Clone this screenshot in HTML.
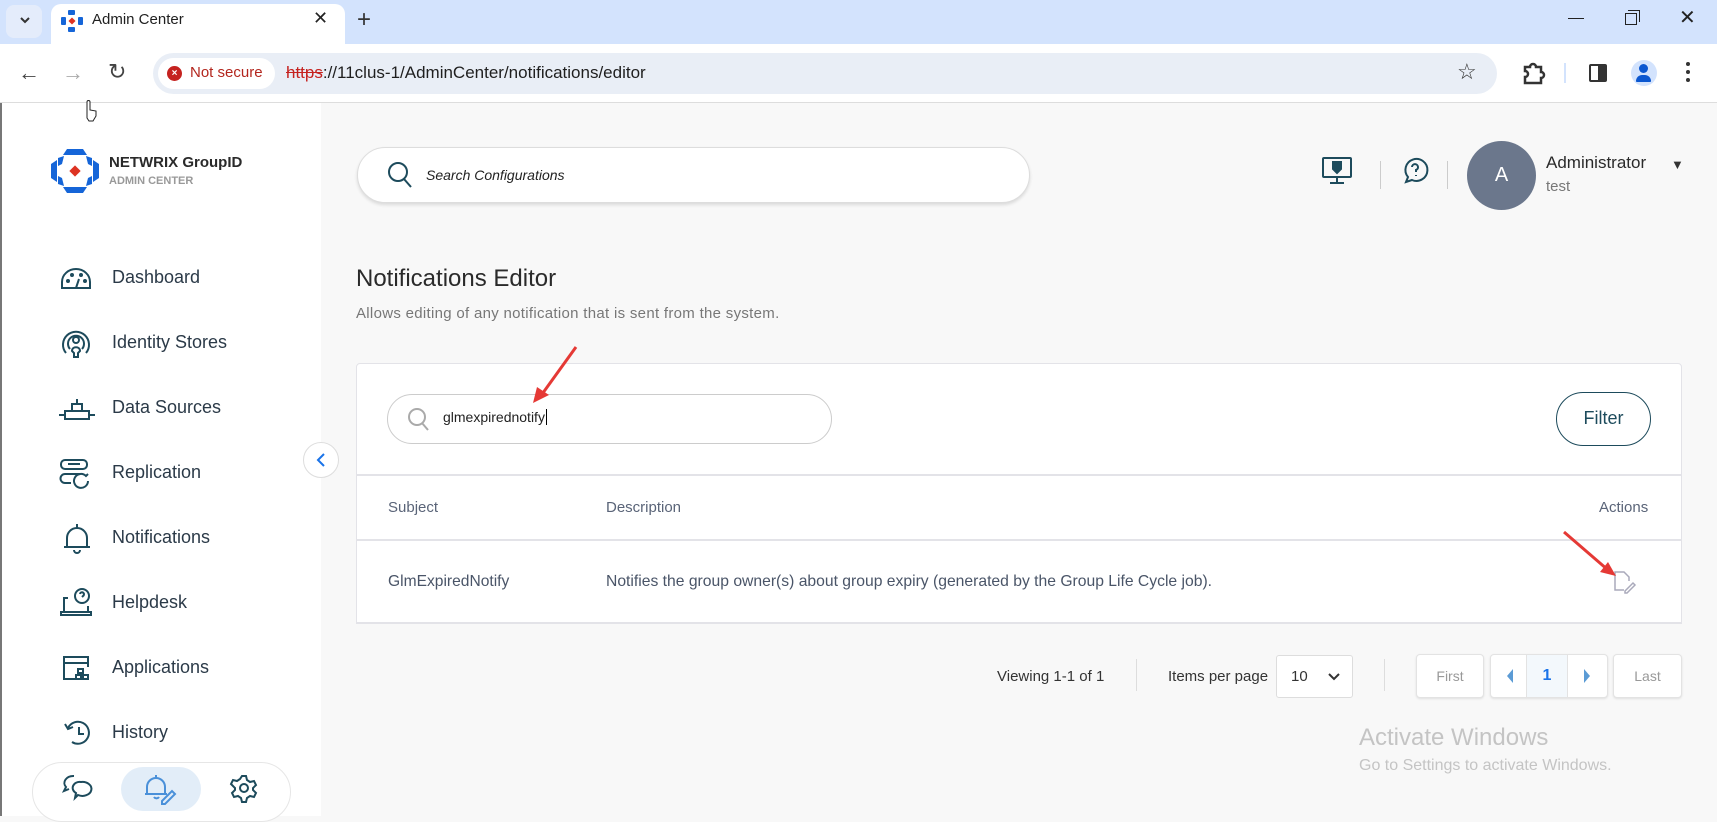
<!DOCTYPE html>
<html><head><meta charset="utf-8"><style>
*{box-sizing:border-box;margin:0;padding:0}
body{width:1717px;height:816px;overflow:hidden;position:relative;font-family:"Liberation Sans",sans-serif;background:#f8f8f8;color:#333}
.a{position:absolute}
.nav{position:absolute;left:112px;font-size:18px;color:#2b3a48}
svg{overflow:visible}
</style></head><body>
<!-- tab bar -->
<div class="a" style="left:0;top:0;width:1717px;height:44px;background:#d3e3fd"></div>
<div class="a" style="left:6px;top:5px;width:36px;height:33px;background:#e4ecfb;border-radius:8px"></div>
<svg class="a" style="left:18px;top:14px" width="14" height="12"><path d="M3 4l4 4 4-4" stroke="#333" stroke-width="2" fill="none"/></svg>
<div class="a" style="left:51px;top:4px;width:294px;height:42px;background:#fff;border-radius:10px 10px 0 0"></div>
<svg class="a" style="left:60px;top:9px" width="24" height="24"><g fill="#1565d8"><rect x="8" y="1" width="7" height="5" rx="1"/><rect x="8" y="18" width="7" height="5" rx="1"/><rect x="1" y="8" width="5" height="8" rx="1"/><rect x="18" y="8" width="5" height="8" rx="1"/></g><rect x="9.5" y="9.5" width="5" height="5" fill="#d32" transform="rotate(45 12 12)"/></svg>
<div class="a" style="left:92px;top:11px;font-size:15px;color:#1f1f1f">Admin Center</div>
<div class="a" style="left:313px;top:8px;font-size:18px;color:#222">✕</div>
<div class="a" style="left:357px;top:6px;font-size:24px;color:#333">+</div>
<div class="a" style="left:1568px;top:8px;width:16px;border-top:1.5px solid #222;margin-top:10px"></div>
<div class="a" style="left:1625px;top:13px;width:12px;height:12px;border:1.5px solid #222"></div>
<div class="a" style="left:1628px;top:10px;width:12px;height:12px;border-top:1.5px solid #222;border-right:1.5px solid #222"></div>
<div class="a" style="left:1679px;top:5px;font-size:20px;color:#222">✕</div>
<!-- toolbar -->
<div class="a" style="left:0;top:44px;width:1717px;height:59px;background:#fff;border-bottom:1px solid #ddd"></div>
<div class="a" style="left:18px;top:60px;font-size:22px;color:#444">←</div>
<div class="a" style="left:62px;top:60px;font-size:22px;color:#aaa">→</div>
<div class="a" style="left:108px;top:59px;font-size:22px;color:#444">↻</div>
<div class="a" style="left:153px;top:53px;width:1344px;height:41px;background:#e9eef6;border-radius:21px"></div>
<div class="a" style="left:158px;top:58px;width:117px;height:31px;background:#fff;border-radius:16px"></div>
<div class="a" style="left:167px;top:66px;width:15px;height:15px;border-radius:50%;background:#c5221f;color:#fff;font-size:10px;text-align:center;line-height:15px;font-weight:bold">×</div>
<div class="a" style="left:190px;top:64px;font-size:15px;color:#b3261e">Not secure</div>
<div class="a" style="left:286px;top:63px;font-size:17px;color:#1f1f1f"><span style="color:#c5221f;text-decoration:line-through">https</span>://11clus-1/AdminCenter/notifications/editor</div>
<div class="a" style="left:1457px;top:59px;font-size:22px;color:#333">☆</div>
<svg class="a" style="left:1522px;top:61px" width="26" height="24" fill="none" stroke="#333" stroke-width="2.5"><path d="M3 6h5a3 3 0 0 1 6 0h5v5a3 3 0 0 1 0 6v5H3v-6a3 3 0 0 0 0-6z"/></svg>
<div class="a" style="left:1564px;top:63px;width:2px;height:20px;background:#d3e3fd"></div>
<div class="a" style="left:1589px;top:64px;width:18px;height:18px;border:2.5px solid #333;border-radius:2px;background:linear-gradient(90deg,#fff 50%,#333 50%)"></div>
<div class="a" style="left:1631px;top:60px;width:26px;height:26px;border-radius:50%;background:#d3e3fd"></div>
<div class="a" style="left:1639px;top:64px;width:9px;height:9px;border-radius:50%;background:#0b57d0"></div>
<div class="a" style="left:1636px;top:75px;width:15px;height:7px;border-radius:7px 7px 1px 1px;background:#0b57d0"></div>
<div class="a" style="left:1686px;top:62px;width:4px;height:4px;border-radius:2px;background:#333;box-shadow:0 8px 0 #333,0 16px 0 #333"></div>
<!-- sidebar -->
<div class="a" style="left:0;top:103px;width:321px;height:713px;background:#fff;border-left:2px solid #777"></div>
<svg class="a" style="left:50px;top:148px" width="50" height="46"><g fill="#1565d8"><path d="M17 1h16l4 6H13z"/><path d="M17 45h16l4-6H13z"/><path d="M1 16l6-4v22l-6-4z"/><path d="M49 16l-6-4v22l6-4z"/><path d="M8 10l6-2 -2 8-4 2z"/><path d="M42 10l-6-2 2 8 4 2z"/><path d="M8 36l6 2-2-8-4-2z"/><path d="M42 36l-6 2 2-8 4-2z"/></g><rect x="21" y="19" width="8" height="8" fill="#d32" transform="rotate(45 25 23)"/></svg>
<div class="a" style="left:109px;top:154px;font-size:15px;font-weight:bold;color:#2a2a2a">NETWRIX GroupID</div>
<div class="a" style="left:109px;top:175px;font-size:11px;color:#999;font-weight:bold">ADMIN CENTER</div>
<svg class="a" style="left:60px;top:266px" width="32" height="24" fill="none" stroke="#1d4b5c" stroke-width="2"><path d="M2 22V16A14 13 0 0 1 30 16V22z"/><path d="M16 22l3-9"/><circle cx="8" cy="15" r="1"/><circle cx="12" cy="9" r="1"/><circle cx="21" cy="9" r="1"/><circle cx="25" cy="15" r="1"/></svg>
<div class="nav" style="top:267px">Dashboard</div>
<svg class="a" style="left:60px;top:329px" width="32" height="30" fill="none" stroke="#1d4b5c" stroke-width="2"><path d="M6 24A13 13 0 1 1 26 24"/><path d="M10 20A8 8 0 1 1 22 20"/><circle cx="16" cy="11" r="3"/><path d="M12 22c0-5 8-5 8 0l-2 2v4h-4v-4z"/></svg>
<div class="nav" style="top:332px">Identity Stores</div>
<svg class="a" style="left:58px;top:398px" width="38" height="24" fill="none" stroke="#1d4b5c" stroke-width="2"><path d="M1 17h6M31 17h6M7 13h24v8H7zM14 13V6h10v7M19 6V1"/></svg>
<div class="nav" style="top:397px">Data Sources</div>
<svg class="a" style="left:60px;top:459px" width="32" height="30" fill="none" stroke="#1d4b5c" stroke-width="2"><rect x="1" y="1" width="26" height="9" rx="4"/><path d="M20 15H5a4 4 0 0 0 0 9h6"/><path d="M28 22a7 7 0 1 1-2-5l2-2"/><path d="M8 5h12"/></svg>
<div class="nav" style="top:462px">Replication</div>
<svg class="a" style="left:63px;top:523px" width="28" height="30" fill="none" stroke="#1d4b5c" stroke-width="2"><path d="M14 1v4M4 24V15a10 10 0 0 1 20 0v9zM1 24h26M11 27a3 3 0 0 0 6 0"/></svg>
<div class="nav" style="top:527px">Notifications</div>
<svg class="a" style="left:60px;top:588px" width="32" height="30" fill="none" stroke="#1d4b5c" stroke-width="2"><path d="M8 10H4v14h24v-6M1 24h30v3H1z"/><circle cx="22" cy="8" r="7"/><path d="M20 6a2 2 0 1 1 3 2l-1 1M22 12v0"/></svg>
<div class="nav" style="top:592px">Helpdesk</div>
<svg class="a" style="left:62px;top:655px" width="30" height="26" fill="none" stroke="#1d4b5c" stroke-width="2"><path d="M14 24H2V2h24v10M2 8h24"/><rect x="16" y="14" width="5" height="4"/><rect x="14" y="20" width="5" height="4"/><rect x="21" y="20" width="5" height="4"/></svg>
<div class="nav" style="top:657px">Applications</div>
<svg class="a" style="left:64px;top:720px" width="28" height="26" fill="none" stroke="#1d4b5c" stroke-width="2"><path d="M4 8A11 11 0 1 1 8 22"/><path d="M1 4l3 5 5-2M15 7v7h5"/></svg>
<div class="nav" style="top:722px">History</div>
<div class="a" style="left:303px;top:442px;width:36px;height:36px;border-radius:50%;background:#fff;border:1.5px solid #ddd"></div>
<svg class="a" style="left:316px;top:452px" width="10" height="16"><path d="M8 2L2 8l6 6" stroke="#1a73e8" stroke-width="2" fill="none"/></svg>
<div class="a" style="left:32px;top:762px;width:259px;height:60px;border:1px solid #e6e6e6;border-radius:30px;background:#fff"></div>
<div class="a" style="left:121px;top:767px;width:80px;height:44px;border-radius:22px;background:#e2edf8"></div>
<svg class="a" style="left:62px;top:774px" width="30" height="28" fill="none" stroke="#1d4b5c" stroke-width="2"><path d="M12 2a9 7 0 0 0-8 11l-2 4 5-2"/><path d="M19 8a9 7 0 1 1-3 13l-3 3 1-5a7 6 0 0 1 5-11z"/></svg>
<svg class="a" style="left:144px;top:774px" width="36" height="30" fill="none" stroke="#4a90d9" stroke-width="2"><path d="M12 1v3M3 20v-7a9 9 0 0 1 18 0v7zM1 20h22M10 23a3 3 0 0 0 5 0"/><path d="M18 27l10-10 3 3-10 10h-3z"/></svg>
<svg class="a" style="left:230px;top:774px" width="28" height="28" fill="none" stroke="#1d4b5c" stroke-width="2"><circle cx="14" cy="14" r="4"/><path d="M12 2h4l1 4 3 2 4-1 2 4-3 3v2l3 3-2 4-4-1-3 2-1 4h-4l-1-4-3-2-4 1-2-4 3-3v-2L1 10l2-4 4 1 3-2z"/></svg>
<!-- main header -->
<div class="a" style="left:357px;top:147px;width:673px;height:56px;border-radius:28px;background:#fff;border:1px solid #ddd;box-shadow:0 2px 3px rgba(0,0,0,.12)"></div>
<svg class="a" style="left:388px;top:162px" width="26" height="28" fill="none" stroke="#1d4b5c" stroke-width="2"><circle cx="10" cy="10" r="9"/><path d="M16 17l7 8"/></svg>
<div class="a" style="left:426px;top:167px;font-size:14px;font-style:italic;color:#222">Search Configurations</div>
<svg class="a" style="left:1322px;top:157px" width="32" height="28" fill="none" stroke="#1d4b5c" stroke-width="2"><rect x="1" y="1" width="28" height="19" rx="1"/><path d="M15 20v5M8 26h14"/><path d="M11 5h8v7l-4 4-4-4z" fill="#1d4b5c"/></svg>
<div class="a" style="left:1380px;top:161px;width:1px;height:28px;background:#ccc"></div>
<svg class="a" style="left:1402px;top:158px" width="26" height="26" fill="none" stroke="#1d4b5c" stroke-width="2"><path d="M4 24l2-5A11 11 0 1 1 10 22z"/><path d="M10 9a3 3 0 1 1 4 3v2M14 17v1"/></svg>
<div class="a" style="left:1447px;top:161px;width:1px;height:28px;background:#ccc"></div>
<div class="a" style="left:1467px;top:141px;width:69px;height:69px;border-radius:50%;background:#6b778c;color:#fff;font-size:20px;text-align:center;line-height:69px">A</div>
<div class="a" style="left:1546px;top:153px;font-size:17px;color:#2a2a2a">Administrator</div>
<div class="a" style="left:1671px;top:157px;font-size:13px;color:#333">▼</div>
<div class="a" style="left:1546px;top:178px;font-size:15px;color:#777">test</div>
<div class="a" style="left:356px;top:265px;font-size:24px;color:#2a2a2a">Notifications Editor</div>
<div class="a" style="left:356px;top:305px;font-size:15px;letter-spacing:.3px;color:#777">Allows editing of any notification that is sent from the system.</div>
<!-- card -->
<div class="a" style="left:356px;top:363px;width:1326px;height:261px;background:#fff;border:1px solid #e3e3e8;border-radius:4px 4px 0 0"></div>
<div class="a" style="left:387px;top:394px;width:445px;height:50px;border:1px solid #ccc;border-radius:25px"></div>
<svg class="a" style="left:407px;top:407px" width="24" height="26" fill="none" stroke="#aaa" stroke-width="2"><circle cx="10" cy="10" r="8"/><path d="M15 16l6 7"/></svg>
<div class="a" style="left:443px;top:409px;font-size:14px;color:#222">glmexpirednotify<span style="border-left:1px solid #000;margin-left:1px"></span></div>
<div class="a" style="left:1556px;top:392px;width:95px;height:54px;border:1.5px solid #1d4b5c;border-radius:27px;font-size:18px;color:#1d4b5c;text-align:center;line-height:51px">Filter</div>
<div class="a" style="left:356px;top:474px;width:1326px;height:2px;background:#e3e3e8"></div>
<div class="a" style="left:356px;top:539px;width:1326px;height:2px;background:#e3e3e8"></div>
<div class="a" style="left:356px;top:622px;width:1326px;height:2px;background:#e3e3e8"></div>
<div class="a" style="left:388px;top:499px;font-size:15px;color:#5a6478">Subject</div>
<div class="a" style="left:606px;top:499px;font-size:15px;color:#5a6478">Description</div>
<div class="a" style="left:1599px;top:499px;font-size:15px;color:#5a6478">Actions</div>
<div class="a" style="left:388px;top:573px;font-size:15.6px;color:#4a5568">GlmExpiredNotify</div>
<div class="a" style="left:606px;top:573px;font-size:15.7px;color:#4a5568">Notifies the group owner(s) about group expiry (generated by the Group Life Cycle job).</div>
<svg class="a" style="left:1613px;top:570px" width="24" height="24" fill="none" stroke="#aab" stroke-width="1.5"><path d="M11 20H2V2h9l5 5v4"/><path d="M12 21l8-8 2 2-8 8h-2z"/></svg>
<!-- red arrows -->
<svg class="a" style="left:530px;top:345px" width="50" height="60"><path d="M46 2L10 52" stroke="#e53935" stroke-width="3"/><path d="M3 58l4-16 12 8z" fill="#e53935"/></svg>
<svg class="a" style="left:1560px;top:530px" width="60" height="50"><path d="M4 2l44 38" stroke="#e53935" stroke-width="3"/><path d="M56 46l-16-4 8-10z" fill="#e53935"/></svg>
<!-- pagination -->
<div class="a" style="left:997px;top:668px;font-size:15px;color:#333">Viewing 1-1 of 1</div>
<div class="a" style="left:1136px;top:659px;width:1px;height:32px;background:#ddd"></div>
<div class="a" style="left:1168px;top:668px;font-size:15px;color:#333">Items per page</div>
<div class="a" style="left:1276px;top:655px;width:77px;height:43px;background:#fff;border:1px solid #ddd;border-radius:3px"></div>
<div class="a" style="left:1291px;top:668px;font-size:15px;color:#333">10</div>
<svg class="a" style="left:1328px;top:673px" width="12" height="8"><path d="M1 1l5 5 5-5" stroke="#333" stroke-width="2" fill="none"/></svg>
<div class="a" style="left:1384px;top:659px;width:1px;height:32px;background:#ddd"></div>
<div class="a" style="left:1416px;top:654px;width:68px;height:44px;background:#fff;border:1px solid #e3e3e3;border-radius:4px;box-shadow:0 1px 2px rgba(0,0,0,.1);font-size:14px;color:#999;text-align:center;line-height:42px">First</div>
<div class="a" style="left:1490px;top:654px;width:118px;height:44px;background:#fff;border:1px solid #e3e3e3;border-radius:4px;box-shadow:0 1px 2px rgba(0,0,0,.1)"></div>
<div class="a" style="left:1526px;top:655px;width:42px;height:42px;background:#f3f8fc;border-left:1px solid #e3e3e3;border-right:1px solid #e3e3e3;font-size:16px;font-weight:bold;color:#1a73e8;text-align:center;line-height:42px">1</div>
<svg class="a" style="left:1505px;top:668px" width="10" height="16"><path d="M8 1L2 8l6 7z" fill="#5b9bd5"/></svg>
<svg class="a" style="left:1582px;top:668px" width="10" height="16"><path d="M2 1l6 7-6 7z" fill="#5b9bd5"/></svg>
<div class="a" style="left:1613px;top:654px;width:69px;height:44px;background:#fff;border:1px solid #e3e3e3;border-radius:4px;box-shadow:0 1px 2px rgba(0,0,0,.1);font-size:14px;color:#999;text-align:center;line-height:42px">Last</div>
<div class="a" style="left:1359px;top:724px;font-size:24px;color:#c4c4c4">Activate Windows</div>
<div class="a" style="left:1359px;top:757px;font-size:16px;color:#c4c4c4">Go to Settings to activate Windows.</div>
<svg class="a" style="left:82px;top:98px" width="16" height="24"><path d="M5 20V4a1.5 1.5 0 0 1 3 0v8l6 1v5l-3 5H7z" fill="#fff" stroke="#222" stroke-width="1"/></svg>
</body></html>
